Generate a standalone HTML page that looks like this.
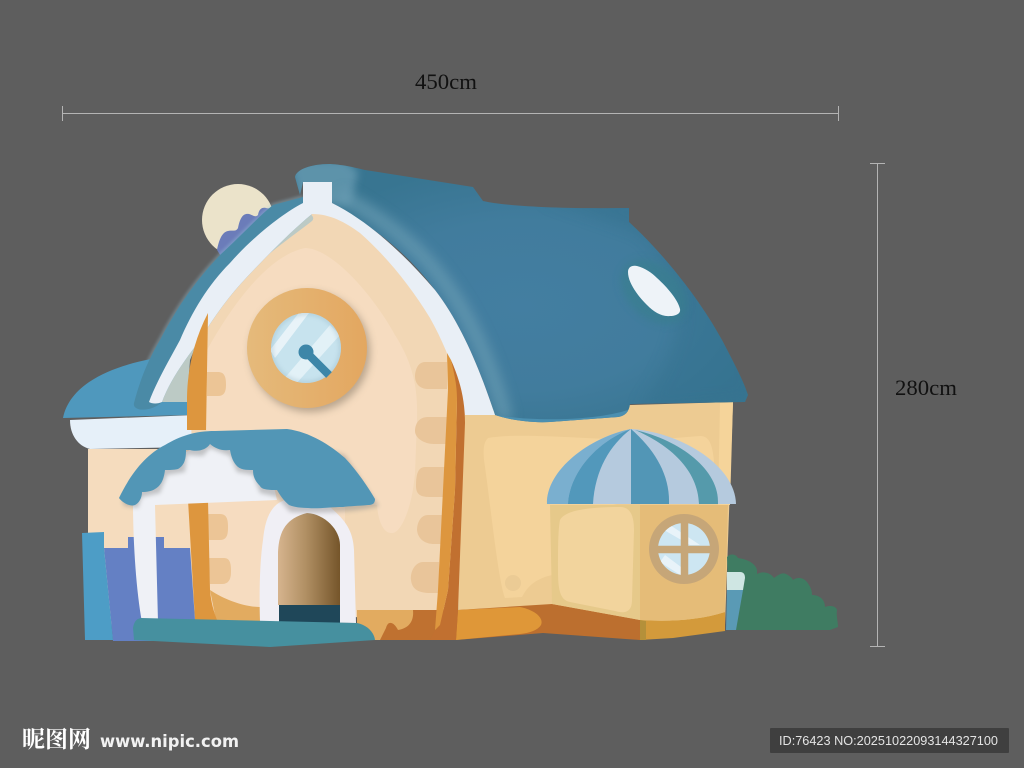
<!DOCTYPE html>
<html>
<head>
<meta charset="utf-8">
<title>House</title>
<style>
html,body{margin:0;padding:0;background:#5e5e5e;width:1024px;height:768px;overflow:hidden}
svg{display:block}
</style>
</head>
<body>
<svg width="1024" height="768" viewBox="0 0 1024 768" xmlns="http://www.w3.org/2000/svg">
<defs>
<filter id="b1" x="-20%" y="-20%" width="140%" height="140%"><feGaussianBlur stdDeviation="1.5"/></filter>
<filter id="b2" x="-20%" y="-20%" width="140%" height="140%"><feGaussianBlur stdDeviation="2"/></filter>
<filter id="b4" x="-20%" y="-20%" width="140%" height="140%"><feGaussianBlur stdDeviation="4"/></filter>
<filter id="b6" x="-30%" y="-30%" width="160%" height="160%"><feGaussianBlur stdDeviation="6"/></filter>
<filter id="b8" x="-30%" y="-30%" width="160%" height="160%"><feGaussianBlur stdDeviation="8"/></filter>
<linearGradient id="door" x1="0" x2="1" y1="0" y2="0"><stop offset="0" stop-color="#d6b48e"/><stop offset=".45" stop-color="#b08f63"/><stop offset="1" stop-color="#75552a"/></linearGradient>
<linearGradient id="ring" x1="0" x2="1" y1="0" y2="0"><stop offset="0" stop-color="#e5ba7b"/><stop offset="1" stop-color="#e3a760"/></linearGradient>
<radialGradient id="roof" cx=".5" cy=".55" r=".55"><stop offset="0" stop-color="#437ea1"/><stop offset=".6" stop-color="#417c9d"/><stop offset="1" stop-color="#387591"/></radialGradient>
<clipPath id="glass"><circle cx="306" cy="348" r="35"/></clipPath>
<clipPath id="roofclip"><path id="rp" d="M295,177 C296,170 310,164 330,164 C345,165 352,167 365,170 L473,187 L483,201 C510,207 570,209 629,208 L629,222 C665,255 700,300 722,340 C735,365 743,380 748,395 L745,402 L630,404 C629,412 625,416 618,417 L550,422 C530,423 510,420 495,415 C480,370 462,325 435,290 C405,250 370,225 332,203 L332,182 L303,182 L300,195 Z"/></clipPath>
<clipPath id="wc"><circle cx="684" cy="549" r="26"/></clipPath>
</defs>

<rect width="1024" height="768" fill="#5e5e5e"/>

<!-- dimension lines -->
<g stroke="#b4b4b4" stroke-width="1" fill="none">
<path d="M62.5,106V121M838.5,106V121M62,113.5H838"/>
<path d="M870,163.5H885M870,646.5H885M877.5,164V646"/>
</g>
<text x="415" y="89" font-family="Liberation Serif, serif" font-size="22" fill="#111" textLength="62" lengthAdjust="spacingAndGlyphs">450cm</text>
<text x="895" y="395" font-family="Liberation Serif, serif" font-size="22" fill="#111" textLength="62" lengthAdjust="spacingAndGlyphs">280cm</text>

<!-- moon -->
<circle cx="238" cy="220" r="36" fill="#ebe3ca"/>
<path d="M217,250 C219,240 222,232 228,231 C233,230 236,232 238,228 C240,218 243,213 249,214 C253,215 255,218 258,215 C259,209 262,207 266,208 C269,209 272,208 275,205 L278,212 L222,258 Z" fill="#6b7cb9"/>

<!-- glow -->
<path d="M134,403 C140,380 148,360 160,340 C178,305 198,278 220,255 C240,237 258,217 273,205 L303,197" fill="none" stroke="#9cc9de" stroke-width="3" opacity=".45" filter="url(#b1)"/>

<!-- left small roof -->
<path d="M151,359 C110,367 70,384 63,418 L190,415 L190,400 L140,400 Z" fill="#4f98bd"/>
<path d="M70,420 L195,415 L195,447 L90,449 C78,446 70,435 70,420 Z" fill="#e6f0f9"/>

<!-- left wall -->
<rect x="88" y="449" width="180" height="176" fill="#f5dcbe"/>

<!-- right wall -->
<path d="M460,410 L733,402 L725,625 L458,625 Z" fill="#edcb92"/>
<path d="M720,403 L733,402 L730,505 L718,505 Z" fill="#f5d49a"/>
<path d="M488,438 C520,432 590,440 650,440 L700,436 C712,436 714,450 715,480 L552,520 L552,575 C530,580 525,592 522,597 L505,598 C498,580 490,500 484,460 C483,448 484,442 488,438 Z" fill="#f4d39b"/>
<circle cx="513" cy="583" r="8" fill="#ebcb95"/>

<!-- gable wall -->
<path d="M310,208 C350,212 410,255 440,300 C455,335 466,385 465,415 L458,612 L200,625 L190,400 L208,315 Z" fill="#f2d7b5"/>
<path d="M305,248 C330,248 370,290 395,335 C412,362 418,385 417,420 L415,473 C412,510 400,535 391,533 C383,533 378,520 377,505 L345,505 L345,620 L205,620 L207,350 C235,300 270,255 305,248 Z" fill="#f6dcc0"/>
<path d="M308,214 C312,214 315,218 312,221 C290,238 270,252 263,260 C240,280 222,300 208,317 L190,360 L187,402 L155,402 C165,370 190,320 210,295 C240,260 275,235 308,214 Z" fill="#bccac5"/>

<!-- floor -->
<path d="M357,610 L460,610 L458,640 L357,640 Z" fill="#bf7130"/>
<path d="M357,610 L413,610 C414,620 410,628 398,630 C394,622 388,620 386,628 L380,640 L357,640 Z" fill="#e2ab60"/>
<path d="M210,590 C225,600 245,607 260,607 L260,625 L217,625 Z" fill="#e2ab60"/>
<path d="M456,640 L458,610 L552,604 L640,620 L640,640 L543,633 Z" fill="#bc6f2f"/>
<path d="M456,640 L458,610 L520,607 C535,610 544,618 541,625 C538,630 530,633 520,634 Z" fill="#df9738"/>
<path d="M640,620 C670,622 700,620 725,612 L725,631 L673,638 L640,640 Z" fill="#d39a3b"/>
<path d="M640,620 L646,621 L646,640 L640,640 Z" fill="#b4903a"/>

<!-- bricks -->
<g fill="#ecc596">
<path d="M207,372 H218 C225,372 226,378 226,385 C226,392 224,396 218,396 H207 Z"/>
<path d="M207,514 H220 C228,514 228,522 228,528 C228,536 226,540 220,540 H208 Z"/>
<path d="M209,558 H224 C231,558 231,566 231,572 C231,580 228,584 222,584 H210 Z"/>
</g>
<g fill="#e9c59a">
<path d="M447,362 H425 C417,362 415,372 415,376 C415,384 420,389 428,389 H447 Z"/>
<path d="M448,417 H428 C418,417 415,425 415,431 C415,438 424,444 434,444 H447 Z"/>
<path d="M445,467 H425 C417,467 416,477 416,486 C416,497 424,497 432,497 H444 Z"/>
<path d="M442,515 H428 C420,515 417,524 417,530 C418,540 426,544 434,544 H442 Z"/>
<path d="M439,562 H423 C415,562 410,572 411,580 C412,590 420,593 430,593 H439 Z"/>
</g>

<!-- roof -->
<use href="#rp" fill="url(#roof)"/>
<g clip-path="url(#roofclip)">
<path d="M290,160 L345,160 L358,172 L350,205 L300,205 Z" fill="#5d93aa" filter="url(#b4)"/>
<path d="M340,195 C375,215 400,232 428,262 C468,308 490,360 506,420" fill="none" stroke="#6a9db3" stroke-width="14" opacity=".75" filter="url(#b6)"/>
<path d="M540,195 L760,210 L750,400 L640,410 Q720,300 640,230 Z" fill="#357290" opacity=".5" filter="url(#b8)"/>
<path d="M480,412 C520,422 590,422 628,410 L628,425 L480,425 Z" fill="#4b8fb0"/>
<ellipse cx="654" cy="292" rx="38" ry="26" transform="rotate(42 654 292)" fill="#377f8c" opacity=".6" filter="url(#b4)"/>
</g>
<path d="M628,272 C628,267 632,265 637,266 C645,268 652,273 657,278 C668,288 678,300 680,309 C681,314 675,316 670,316 C662,317 654,312 647,305 C640,298 628,284 628,272 Z" fill="#eef3f8"/>

<!-- roof left band -->
<path d="M134,403 C140,380 148,360 160,340 C178,305 198,278 220,255 C240,237 258,217 273,205 L303,197 L312,214 C290,232 265,258 247,277 C230,295 215,315 200,340 C185,360 170,380 162,402 C152,412 132,412 134,403 Z" fill="#4a8aa6"/>

<!-- white arch -->
<path d="M303,182 H332 V203 C370,222 405,255 435,290 C462,325 480,370 495,415 L465,415 C460,385 448,350 430,318 C410,285 385,255 360,233 C345,222 330,214 312,214 C290,232 265,258 247,277 C230,295 215,315 200,340 C185,360 170,380 162,402 C158,404 152,404 149,402 C155,385 168,362 180,340 C192,312 208,285 230,263 C250,240 280,215 303,203 Z" fill="#e9eff6"/>

<!-- left beam -->
<path d="M208,313 L206,430 L187,430 L187,400 C187,370 194,340 208,313 Z" fill="#dd963e"/>
<path d="M188,500 L208,500 L210,590 C211,603 214,612 217,620 L195,620 Z" fill="#dd963e"/>

<!-- right beam -->
<path d="M451,360 C460,380 465,400 465,423 L458,610 L456,640 L430,640 L435,630 L440,625 L448,590 L455,490 L457,400 Z" fill="#c17030"/>
<path d="M447,353 L451,360 C456,380 457,390 457,400 L455,490 L448,590 L440,625 L435,630 L438,590 L443,490 L448,390 Z" fill="#dd963e"/>

<!-- clock -->
<circle cx="310" cy="352" r="60" fill="#7a6d5c" opacity=".5" filter="url(#b4)"/>
<circle cx="307" cy="348" r="60" fill="url(#ring)"/>
<circle cx="306" cy="348" r="35" fill="#c7e3ee"/>
<g clip-path="url(#glass)">
<path d="M270,350 L305,305 L315,305 L275,358 Z" fill="#e8f3f8"/>
<path d="M283,380 L330,325 L340,335 L295,385 Z" fill="#e2f1f7"/>
<circle cx="306" cy="348" r="35" fill="none" stroke="#8fb0c0" stroke-width="3" opacity=".5" filter="url(#b2)"/>
</g>
<path d="M306,352 L329,375" stroke="#3d86a8" stroke-width="8"/>
<circle cx="306" cy="352" r="7.5" fill="#3d86a8"/>

<!-- fence / blue -->
<path d="M104,548 H128 V537 H133 L157,537 H164 V548 H190 L195,620 L196,641 H113 Z" fill="#6480c4"/>
<path d="M82,533 L104,532 L104,548 L113,640 L85,640 Z" fill="#4d9dc6"/>

<!-- awning white + pillar -->
<path d="M133,503 L150,470 L210,440 L270,470 L277,500 L155,505 L158,622 H142 C136,590 133,540 133,503 Z" fill="#eff1f6"/>

<!-- door frame -->
<path d="M260,622 C259,590 260,560 263,540 C265,520 270,505 285,500 L330,507 C345,520 353,530 354,550 L356,623 Z" fill="#f0eff5"/>
<path d="M278,605 L278,552 C279,530 287,518 307,513 C325,514 340,530 340,545 L340,605 Z" fill="url(#door)"/>
<rect x="279" y="605" width="61" height="18" fill="#1f4759"/>

<!-- awning -->
<path d="M124,506 L122,500 L155,455 L210,438 L287,436 L345,455 L379,506 C360,512 320,514 290,512 L277,497 L260,493 L253,475 L237,472 L230,456 L210,448 L203,456 L187,455 L185,472 L167,475 L160,493 L142,497 L138,508 Z" fill="#8a8a8a" opacity=".45" filter="url(#b2)"/>
<path d="M119,498 C130,475 145,455 165,445 C180,436 195,431 215,431 L287,429 C310,432 330,445 345,458 C358,472 368,487 375,499 C375,504 372,505 368,505 C358,506 350,506 343,507 C330,507 318,509 308,508 C298,508 291,506 289,505 C283,500 280,495 277,490 C270,490 262,490 260,486 C254,480 253,475 253,470 C246,470 240,470 236,465 C232,460 231,455 230,450 C222,451 216,449 210,444 C206,450 198,452 190,450 L186,450 C186,458 185,465 178,469 C173,470 170,470 165,470 C164,478 162,485 155,489 C152,491 147,492 142,492 C142,498 139,503 135,505 C130,507 123,503 119,498 Z" fill="#5296b6"/>

<!-- ground strip -->
<path d="M134,640 L133,628 C134,622 136,619 141,618 L357,623 C367,625 374,632 375,640 L270,647 Z" fill="#46909f"/>

<!-- bay window -->
<path d="M550,505 H640 V620 L552,604 Z" fill="#e6c98a"/>
<path d="M560,520 C565,510 590,507 620,507 C630,507 634,515 634,530 L632,600 C632,612 625,614 615,611 L570,602 C560,600 558,590 558,570 C558,550 558,530 560,520 Z" fill="#f2d49d"/>
<path d="M640,505 H728 L725,612 C700,620 670,622 640,620 Z" fill="#e5bc78"/>
<circle cx="684" cy="549" r="35" fill="#c6a678"/>
<circle cx="684" cy="549" r="26" fill="#cde6f2"/>
<g clip-path="url(#wc)">
<path d="M670,525 L700,545 L690,545 L664,530 Z" fill="#e8f3f9"/>
<path d="M665,555 L685,570 L685,578 L660,562 Z" fill="#e8f3f9"/>
</g>
<path d="M684.5,520 V578 M656,549.5 H713" stroke="#c6a678" stroke-width="7.5"/>

<!-- dome -->
<path d="M547,504 C546,470 590,437 631,429 C680,432 735,465 736,504 Z" fill="#b5cade"/>
<path d="M547,504 C546,470 590,437 631,429 C600,440 570,470 568,504 Z" fill="#7aafcf"/>
<path d="M568,504 C570,470 600,440 631,429 C610,445 595,470 593,504 Z" fill="#5298bb"/>
<path d="M631,429 C655,450 670,475 669,504 L631,504 Z" fill="#5296b6"/>
<path d="M635,430 C680,440 720,470 718,504 H699 C698,470 670,445 635,430 Z" fill="#559aab"/>

<!-- bush and pot -->
<path d="M727,557 C730,553 736,554 738,558 C745,559 755,562 757,570 L757,574 C762,571 770,572 774,578 C778,575 782,572 786,574 C790,576 792,578 793,580 C797,577 803,577 807,582 C810,586 812,590 812,595 C820,595 825,600 825,607 C830,605 836,606 837,610 C836,615 838,622 838,627 L830,630 H730 Z" fill="#3f7c62"/>
<path d="M727,572 H740 C744,572 745,575 745,578 L743,590 H727 Z" fill="#cfe6e3"/>
<path d="M727,590 H743 L736,630 H726 Z" fill="#5a9ab5"/>

<!-- watermark -->
<text x="22" y="747" font-family="Noto Serif CJK SC, serif" font-weight="700" font-size="23" fill="#fff" textLength="69" lengthAdjust="spacingAndGlyphs">昵图网</text>
<text x="100" y="747" font-family="DejaVu Sans, sans-serif" font-weight="700" font-size="17" fill="#f2f2f2" textLength="139" lengthAdjust="spacingAndGlyphs">www.nipic.com</text>
<rect x="770" y="728" width="239" height="25" rx="1" fill="#3f3f3f"/>
<text x="779" y="745" font-family="Liberation Sans, sans-serif" font-size="13" fill="#e4e4e4" textLength="219" lengthAdjust="spacingAndGlyphs">ID:76423 NO:20251022093144327100</text>
</svg>
</body>
</html>
